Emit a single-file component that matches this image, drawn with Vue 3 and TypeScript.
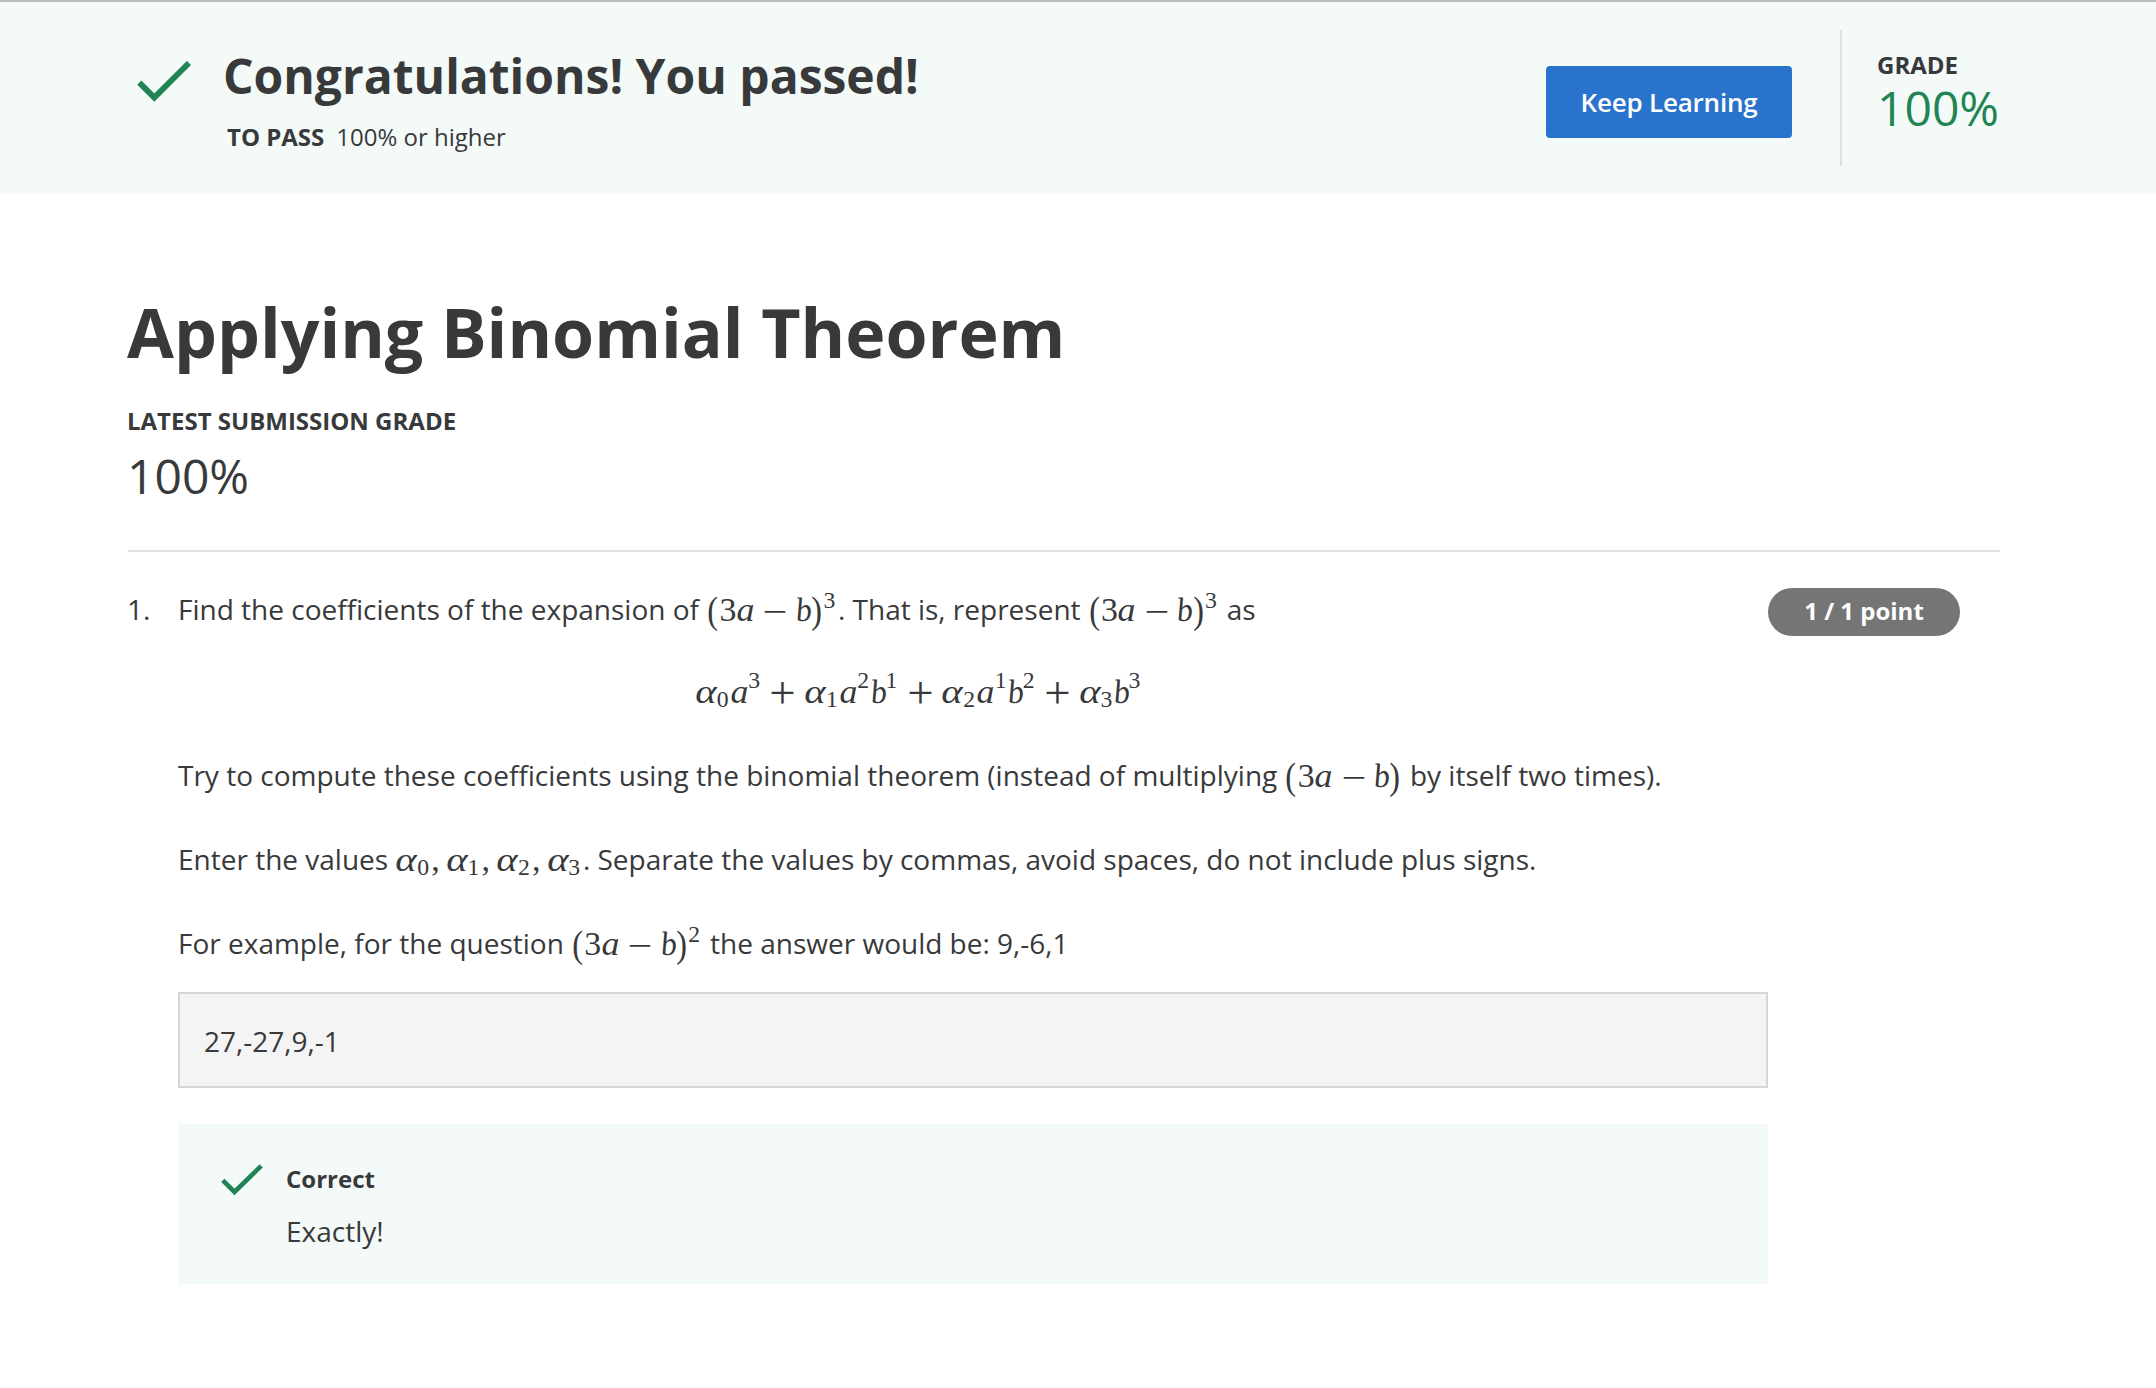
<script setup lang="ts">
import { h, type FunctionalComponent } from 'vue'

type Glyph = [text: string, kind: string]

const kinds: Record<string, string> = {
  '(': 'paren', ')': 'paren', '−': 'op minus', '+': 'op plus', a: 'va', b: 'vb', α: 'alpha', ',': 'comma',
}

/** Splits a small TeX-like string ("^3" superscript, "_0" subscript) into glyph cells. */
function parse(src: string): Glyph[] {
  const out: Glyph[] = []
  for (let i = 0; i < src.length; i++) {
    const c = src[i]
    if (c === '^') out.push([src[++i], 'sup'])
    else if (c === '_') out.push([src[++i], 'sub'])
    else out.push([c, kinds[c] ?? 'digit'])
  }
  return out
}

const Tex: FunctionalComponent<{ f: string }> = (props) =>
  h('span', { class: 'tex' }, parse(props.f).map(([t, k]) => h('span', { class: ['g', k] }, [h('i', t)])))
Tex.props = ['f']

const answer = '27,-27,9,-1'
</script>

<template>
  <div class="page">
    <header class="banner">
      <svg class="check big" viewBox="0 0 54 42"><path d="M2.3 21.6 17.3 36.6 52 2" /></svg>
      <div class="result">
        <h2>Congratulations! You passed!</h2>
        <p><b>TO PASS</b><span>100% or higher</span></p>
      </div>
      <button class="keep" type="button">Keep Learning</button>
      <div class="grade">
        <b>GRADE</b>
        <span>100%</span>
      </div>
    </header>

    <main>
      <h1>Applying Binomial Theorem</h1>
      <div class="latest">LATEST SUBMISSION GRADE</div>
      <div class="score">100%</div>

      <section class="question">
        <div class="num">1.</div>
        <div class="body">
          <p>Find the coefficients of the expansion of <Tex f="(3a−b)^3" />. That is, represent <Tex f="(3a−b)^3" /> as</p>
          <p class="display"><Tex f="α_0a^3+α_1a^2b^1+α_2a^1b^2+α_3b^3" /></p>
          <p>Try to compute these coefficients using the binomial theorem (instead of multiplying <Tex f="(3a−b)" /> by itself two times).</p>
          <p>Enter the values <Tex f="α_0,α_1,α_2,α_3" />. Separate the values by commas, avoid spaces, do not include plus signs.</p>
          <p>For example, for the question <Tex f="(3a−b)^2" /> the answer would be: 9,-6,1</p>
          <div class="answer">{{ answer }}</div>
          <div class="feedback">
            <svg class="check small" viewBox="0 0 42 32"><path d="M1.8 16.3 13.5 28 40.2 1.8" /></svg>
            <div>
              <b>Correct</b>
              <span>Exactly!</span>
            </div>
          </div>
        </div>
        <div class="points">1 / 1 point</div>
      </section>
    </main>
  </div>
</template>

<style>
body { margin: 0; background: #fff; }

.tex { font-family: 'Liberation Serif', serif; font-size: 33.88px; line-height: 0; white-space: nowrap; margin-right: 1px; }
.tex .g { display: inline-block; text-align: center; line-height: 0; position: relative; top: 0.5px; }
.tex .g i { display: inline-block; font-style: normal; line-height: 0; }
.tex .paren { width: 0.389em; }
.tex .paren i { transform: scale(0.95, 1.14); }
.tex .digit { width: 0.5em; }
.tex .op { width: 0.778em; margin: 0 0.222em; }
.display .tex .op { margin: 0 0.238em; }
.tex .minus i { transform: translateY(1.5px) scaleX(1.3); }
.tex .plus i { transform: translateY(1px) scale(1.38); }
.tex .va { width: 0.529em; }
.tex .va i, .tex .vb i, .tex .alpha i { font-style: italic; }
.tex .va i { transform: scaleX(1.06); }
.tex .vb { width: 0.429em; }
.tex .vb i { transform: translateX(-1px) skewX(5deg) scaleX(0.95); }
.tex .alpha { width: 0.643em; }
.tex .alpha i { transform: scaleX(1.2); }
.tex .comma { width: 0.278em; margin-right: 0.167em; }
.tex .sup, .tex .sub { font-size: 0.7em; width: 0.5em; margin-right: 0.0714em; }
.tex .sup { top: -0.519em; }
.display .tex .sup { top: -0.59em; }
.tex .sub { top: 0.225em; }
</style>

<style scoped>
.page { font-family: 'Open Sans', sans-serif; color: #38393b; width: 2156px; height: 1388px; overflow: hidden; background: #fff; }
h1, h2, p { margin: 0; }
.banner { box-sizing: border-box; height: 194px; border-top: 2px solid #bbbdbc; background: #f4faf8; display: flex; align-items: flex-start; padding: 0 156px 0 137px; }
.check { flex: none; fill: none; stroke: #208454; }
.big { width: 54px; height: 42px; margin-top: 59px; stroke-width: 5.8; }
.small { width: 42px; height: 32px; margin-top: 40px; stroke-width: 4.6; }
.result { margin: 38px auto 0 32px; }
h2 { font-size: 48px; line-height: 72px; font-weight: 700; white-space: nowrap; }
.result p { font-size: 24px; line-height: 36px; margin: 7px 0 0 4px; }
.result p span { margin-left: 12px; }
.keep { width: 246px; height: 72px; margin: 64px 48px 0 0; border: 0; padding: 0; border-radius: 4px; background: #2a73cc; color: #fff; font: 600 26px/72px 'Open Sans', sans-serif; letter-spacing: -0.2px; }
.grade { box-sizing: border-box; width: 160px; height: 136px; margin-top: 28px; border-left: 2px solid #dde2e1; padding: 17px 0 0 35px; display: flex; flex-direction: column; }
.grade b { font-size: 24px; line-height: 36px; }
.grade span { font-size: 48px; line-height: 60px; margin-top: -5px; color: #208454; }
main { padding: 92px 156px 0 128px; }
h1, .latest, .score, .num { margin-left: -1px; }
h1 { font-size: 68px; line-height: 92px; font-weight: 700; }
.latest { margin-top: 25px; font-size: 24px; line-height: 36px; font-weight: 700; }
.score { font-size: 48px; line-height: 72px; margin-top: 1px; margin-bottom: 38px; }
.question { border-top: 2px solid #e1e1e1; padding-top: 36px; display: flex; align-items: flex-start; font-size: 28px; line-height: 42px; }
.num { width: 51px; }
.body { width: 1590px; }
.body p { white-space: nowrap; height: 42px; margin-bottom: 42px; }
.body p:first-child { margin-bottom: 40px; }
.body .display { width: 1482px; text-align: center; }
.body p:nth-child(5) { margin-bottom: 28px; }
.answer { box-sizing: border-box; height: 96px; border: 2px solid #d6d6d6; background: #f4f4f4; padding: 26px 24px; }
.feedback { box-sizing: border-box; height: 160px; margin-top: 36px; background: #f4faf8; display: flex; padding-left: 43px; }
.feedback div { display: flex; flex-direction: column; margin-left: 23px; padding-top: 37px; }
.feedback b { font-size: 24px; line-height: 36px; }
.feedback span { margin-top: 13px; }
.points { width: 192px; height: 48px; border-radius: 24px; background: #757575; color: #fff; font-size: 24px; font-weight: 700; line-height: 46px; text-align: center; }
</style>
